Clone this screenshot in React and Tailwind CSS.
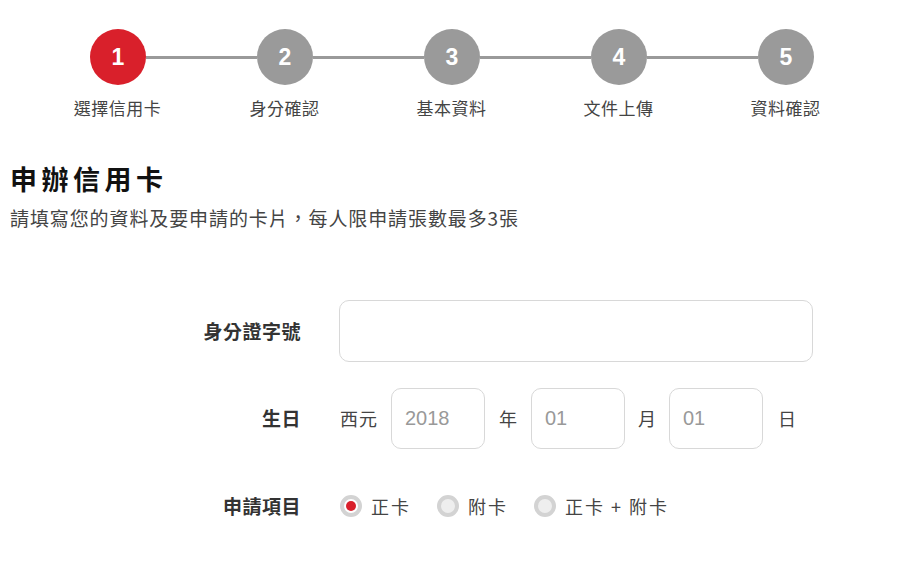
import React from "react";

const font = { fontFamily: '"Noto Sans CJK TC", "Noto Sans", sans-serif' };
const numFont = { fontFamily: '"Liberation Sans", Arial, sans-serif' };

function Radio({ checked, label }) {
  return (
    <label className="flex items-center gap-[9px] cursor-pointer">
      <span
        className={
          "flex h-[22px] w-[22px] items-center justify-center rounded-full border-4 border-[#d3d3d3] " +
          (checked ? "bg-white" : "bg-[#eeeeee]")
        }
      >
        {checked && <span className="h-[10px] w-[10px] rounded-full bg-[#d9202b]" />}
      </span>
      <span className="text-[18px] leading-none text-[#444] tracking-[2px]">{label}</span>
    </label>
  );
}

function DateInput({ placeholder, className }) {
  return (
    <input
      className={
        "h-[61px] w-[94px] rounded-[10px] border border-[#d8d8d8] px-[13px] text-[20px] text-[#999] outline-none placeholder:text-[#999] " +
        className
      }
      placeholder={placeholder}
      style={numFont}
    />
  );
}

export default function App() {
  const steps = ["選擇信用卡", "身分確認", "基本資料", "文件上傳", "資料確認"];
  return (
    <div className="min-h-[562px] w-[907px] bg-white" style={font}>
      {/* Stepper */}
      <div className="pt-[29px]">
        <div className="ml-[90px] flex w-[724px] items-center">
          {steps.map((s, i) => (
            <React.Fragment key={s}>
              {i > 0 && <div className="h-[3px] flex-1 bg-[#9a9a9a]" />}
              <div
                className={
                  "flex h-[56px] w-[56px] items-center justify-center rounded-full text-[23px] font-bold text-white " +
                  (i === 0 ? "bg-[#d9202b]" : "bg-[#9a9a9a]")
                }
                style={numFont}
              >
                {i + 1}
              </div>
            </React.Fragment>
          ))}
        </div>
        <div className="ml-[34px] mt-[12px] grid w-[835px] grid-cols-5">
          {steps.map((s) => (
            <div key={s} className="text-center text-[17px] leading-[22px] tracking-[0.5px] text-[#444]">
              {s}
            </div>
          ))}
        </div>
      </div>

      {/* Title */}
      <div className="px-[10px] pt-[44px]">
        <h1 className="text-[27px] font-bold leading-[32px] tracking-[4.5px] text-[#111]">申辦信用卡</h1>
        <p className="mt-[11px] text-[19px] leading-[24px] tracking-[0.9px] text-[#444]">
          請填寫您的資料及要申請的卡片，每人限申請張數最多3張
        </p>
      </div>

      {/* Form */}
      <div className="mt-[70px] flex flex-col gap-[26px] px-[10px]">
        <div className="flex items-center">
          <div className="w-[291px] text-right text-[19px] font-bold tracking-[0.5px] text-[#333]">身分證字號</div>
          <input className="ml-[38px] h-[62px] w-[474px] rounded-[10px] border border-[#d8d8d8] px-4 text-[18px] outline-none" />
        </div>
        <div className="flex items-center">
          <div className="w-[291px] text-right text-[19px] font-bold tracking-[0.5px] text-[#333]">生日</div>
          <div className="ml-[39px] flex items-center text-[18px] text-[#444]">
            <span className="tracking-[1px]">西元</span>
            <DateInput placeholder="2018" className="ml-[13px]" />
            <span className="ml-[14px]">年</span>
            <DateInput placeholder="01" className="ml-[14px] w-[93px]" />
            <span className="ml-[13px]">月</span>
            <DateInput placeholder="01" className="ml-[13px]" />
            <span className="ml-[15px]">日</span>
          </div>
        </div>
        <div className="mt-[17px] flex items-center">
          <div className="w-[291px] text-right text-[19px] font-bold tracking-[0.5px] text-[#333]">申請項目</div>
          <div className="ml-[39px] flex items-center gap-[26px]">
            <Radio checked label="正卡" />
            <Radio label="附卡" />
            <Radio label="正卡 + 附卡" />
          </div>
        </div>
      </div>
    </div>
  );
}
